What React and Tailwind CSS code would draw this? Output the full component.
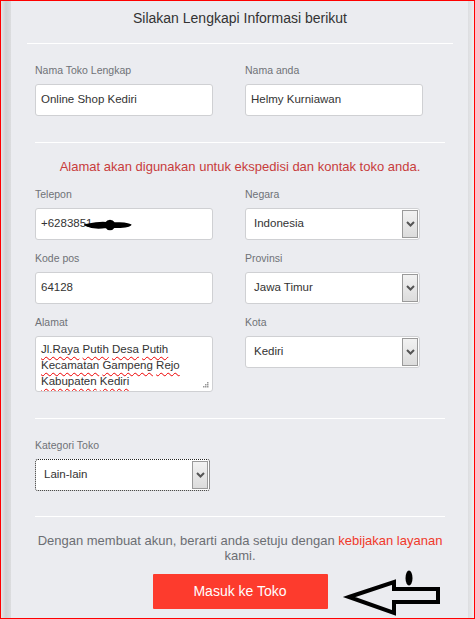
import React from 'react';

const Label = ({ children }) => (
  <div className="text-[10.5px] leading-4 text-[#6f7277] mb-[6px]">{children}</div>
);

const TextInput = ({ value, children }) => (
  <div className="relative w-[178px] h-8 bg-white border border-[#cfd0d3] rounded-[3px] flex items-center pl-[5px] text-[11.5px] text-[#333]">
    {value}
    {children}
  </div>
);

const Chevron = () => (
  <svg width="9" height="6" viewBox="0 0 9 6">
    <path d="M1 1 L4.5 4.5 L8 1" fill="none" stroke="#555" strokeWidth="2" />
  </svg>
);

const Select = ({ value, focused }) => (
  <div
    className={
      'w-[175px] h-8 bg-white rounded-[3px] flex items-stretch text-[11.5px] text-[#333] ' +
      (focused ? 'border border-dotted border-[#222]' : 'border border-[#cfd0d3]')
    }
  >
    <div className="flex-1 flex items-center pl-2">{value}</div>
    <div className="w-[16px] my-[1px] mr-[1px] bg-gradient-to-b from-[#f2f2f2] to-[#dcdcdc] border border-[#9a9a9a] flex items-center justify-center">
      <Chevron />
    </div>
  </div>
);

const Wavy = ({ children }) => (
  <span className="underline decoration-wavy decoration-[#e00] decoration-1 underline-offset-[3px]">{children}</span>
);

const Divider = ({ className }) => <div className={'h-px bg-white ' + className} />;

export default function App() {
  return (
    <div
      className="relative w-[475px] h-[619px] border border-[#ff0000] flex overflow-hidden"
      style={{ fontFamily: '"Liberation Sans", Arial, sans-serif' }}
    >
      {/* left shadow strip */}
      <div className="w-[10px] bg-gradient-to-r from-[#e4e5e6] via-[#cfd1d3] to-[#dcdddf]" />

      {/* main panel */}
      <div className="flex-1 bg-[#ebecf0] flex flex-col pl-6 pr-[23px] pt-[7px]">
        <h1 className="text-[14px] leading-5 text-[#333] text-center">Silakan Lengkapi Informasi berikut</h1>
        <Divider className="mt-[15px] -mx-2" />

        <div className="grid grid-cols-[178px_178px] gap-x-8 mt-[18px]">
          <div>
            <Label>Nama Toko Lengkap</Label>
            <TextInput value="Online Shop Kediri" />
          </div>
          <div>
            <Label>Nama anda</Label>
            <TextInput value="Helmy Kurniawan" />
          </div>
        </div>

        <Divider className="mt-[26px]" />

        <p className="mt-[15px] text-[13px] leading-[18px] text-[#c83c3c] text-center">
          Alamat akan digunakan untuk ekspedisi dan kontak toko anda.
        </p>

        <div className="grid grid-cols-[178px_178px] gap-x-8 mt-[10px]">
          <div className="flex flex-col">
            <Label>Telepon</Label>
            <TextInput value="+6283851">
              <svg className="absolute left-[48px] top-[9px]" width="48" height="14" viewBox="0 0 48 14">
                <path d="M2 7 C 12 5, 18 4, 22 5 C 24 2, 28 2, 30 5 C 38 5, 44 6, 46 7 C 44 9, 36 9, 30 9 C 28 12, 24 12, 22 9 C 16 10, 8 10, 2 7 Z" fill="#000" stroke="#000" strokeWidth="2" />
              </svg>
            </TextInput>
            <div className="mt-[10px]">
              <Label>Kode pos</Label>
              <TextInput value="64128" />
            </div>
            <div className="mt-[10px]">
              <Label>Alamat</Label>
              <div className="relative w-[178px] h-[56px] mt-px bg-white border border-[#cfd0d3] rounded-[3px] pl-[5px] pt-[4px] text-[11.5px] leading-4 text-[#333] overflow-hidden">
                <div><Wavy>Jl.Raya</Wavy> <Wavy>Putih</Wavy> <Wavy>Desa</Wavy> <Wavy>Putih</Wavy></div>
                <div><Wavy>Kecamatan</Wavy> <Wavy>Gampeng</Wavy> <Wavy>Rejo</Wavy></div>
                <div><Wavy>Kabupaten</Wavy> <Wavy>Kediri</Wavy></div>
                <svg className="absolute right-[3px] bottom-[3px]" width="6" height="6" viewBox="0 0 6 6">
                  <rect x="4" y="0" width="1.5" height="1.5" fill="#999" />
                  <rect x="2" y="2" width="1.5" height="1.5" fill="#999" />
                  <rect x="4" y="2" width="1.5" height="1.5" fill="#999" />
                  <rect x="0" y="4" width="1.5" height="1.5" fill="#999" />
                  <rect x="2" y="4" width="1.5" height="1.5" fill="#999" />
                  <rect x="4" y="4" width="1.5" height="1.5" fill="#999" />
                </svg>
              </div>
            </div>
          </div>
          <div className="flex flex-col">
            <Label>Negara</Label>
            <Select value="Indonesia" />
            <div className="mt-[10px]">
              <Label>Provinsi</Label>
              <Select value="Jawa Timur" />
            </div>
            <div className="mt-[10px]">
              <Label>Kota</Label>
              <Select value="Kediri" />
            </div>
          </div>
        </div>

        <Divider className="mt-[26px]" />

        <div className="mt-[18px]">
          <Label>Kategori Toko</Label>
          <Select value="Lain-lain" focused />
        </div>

        <Divider className="mt-[25px]" />

        <p className="mt-4 text-[13px] leading-[15px] text-[#6b6e73] text-center whitespace-nowrap">
          Dengan membuat akun, berarti anda setuju dengan{' '}
          <span className="text-[#f0392b]">kebijakan layanan</span>
          <br />
          kami.
        </p>

        <div className="mt-[11px] flex justify-center">
          <button className="w-[175px] h-[35px] bg-[#fd3b2d] text-white text-[14px] rounded-[1px]">
            Masuk ke Toko
          </button>
        </div>
      </div>

      {/* right strip */}
      <div className="w-[6px] bg-gradient-to-r from-[#dcdde0] to-[#eeeeef]" />

      {/* hand-drawn arrow annotation */}
      <svg className="absolute left-0 top-0 pointer-events-none" width="475" height="619" viewBox="0 0 475 619">
        <path d="M348 596 L393 581 L393 588 L437 588 L437 601 L393 601 L393 612 Z" fill="none" stroke="#000" strokeWidth="4" strokeLinejoin="miter" />
        <ellipse cx="408" cy="577" rx="3.5" ry="7.5" fill="#000" />
      </svg>
    </div>
  );
}
